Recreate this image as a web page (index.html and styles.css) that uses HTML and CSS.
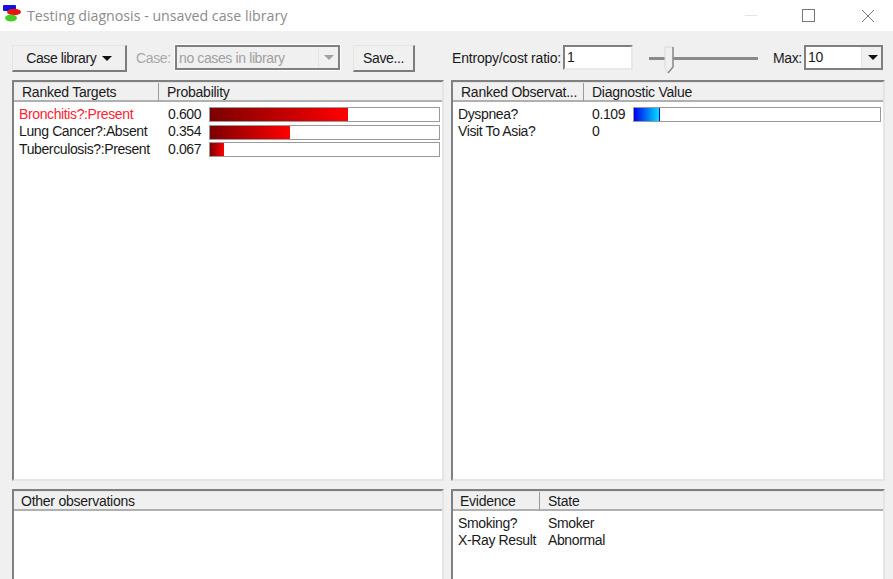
FILE: index.html
```html
<!DOCTYPE html>
<html lang="en">

<head>
    <meta charset="UTF-8">
    <title>Testing diagnosis - unsaved case library</title>
    <link rel="stylesheet" href="styles.css">
</head>

<body>
    <header class="titlebar">
        <svg class="app-icon" width="18" height="17" viewBox="0 0 18 17">
            <rect x="0" y="0" width="13" height="6" rx="1" fill="#1212e0"/>
            <ellipse cx="11" cy="7" rx="7" ry="3.2" fill="#ee1111"/>
            <ellipse cx="8" cy="13" rx="6" ry="3.5" fill="#44cc22"/>
        </svg>
        <span class="title">Testing diagnosis - unsaved case library</span>
        <div class="win-buttons">
            <span class="win-min"></span>
            <span class="win-max"></span>
            <svg class="win-close" width="14" height="14" viewBox="0 0 14 14">
                <path d="M1 1L13 13M13 1L1 13" stroke="#777" stroke-width="1" fill="none"/>
            </svg>
        </div>
    </header>

    <section class="toolbar">
        <button class="btn btn-library">Case library <span class="caret"></span></button>
        <label class="lbl lbl-disabled lbl-case">Case:</label>
        <div class="combo combo-disabled">
            <span class="combo-text">no cases in library</span>
            <span class="combo-arrow"><span class="caret caret-grey"></span></span>
        </div>
        <button class="btn btn-save">Save...</button>
        <label class="lbl lbl-ratio">Entropy/cost ratio:</label>
        <div class="textbox">1</div>
        <div class="slider">
            <div class="slider-track"></div>
            <svg class="slider-thumb" width="11" height="29" viewBox="0 0 11 29">
                <path d="M1 1H9V21L4 27L1 22Z" fill="#f0f0f0" stroke="#d8d8d8"/>
                <path d="M9 1V21L4 27" fill="none" stroke="#8a8a8a" stroke-width="1.5"/>
            </svg>
        </div>
        <label class="lbl lbl-max">Max:</label>
        <div class="combo combo-max">
            <span class="combo-text">10</span>
            <span class="combo-arrow"><span class="caret"></span></span>
        </div>
    </section>

    <main class="panels">
        <section class="panel">
            <div class="head">
                <div class="col-target">Ranked Targets</div>
                <div class="col-rest">Probability</div>
            </div>
            <div class="rows">
                <div class="row">
                    <span class="name-target hot">Bronchitis?:Present</span>
                    <span class="val">0.600</span>
                    <div class="bar"><div class="fill red" style="width: 60.3%"></div></div>
                </div>
                <div class="row">
                    <span class="name-target">Lung Cancer?:Absent</span>
                    <span class="val">0.354</span>
                    <div class="bar"><div class="fill red" style="width: 35%"></div></div>
                </div>
                <div class="row">
                    <span class="name-target">Tuberculosis?:Present</span>
                    <span class="val">0.067</span>
                    <div class="bar"><div class="fill red" style="width: 6.2%"></div></div>
                </div>
            </div>
        </section>

        <section class="panel">
            <div class="head">
                <div class="col-obs">Ranked Observat...</div>
                <div class="col-rest">Diagnostic Value</div>
            </div>
            <div class="rows">
                <div class="row">
                    <span class="name-obs">Dyspnea?</span>
                    <span class="val val-obs">0.109</span>
                    <div class="bar"><div class="fill blue" style="width: 10%"></div></div>
                </div>
                <div class="row">
                    <span class="name-obs">Visit To Asia?</span>
                    <span class="val val-obs">0</span>
                </div>
            </div>
        </section>

        <section class="panel">
            <div class="head">
                <div class="col-full">Other observations</div>
            </div>
        </section>

        <section class="panel">
            <div class="head">
                <div class="col-evidence">Evidence</div>
                <div class="col-rest">State</div>
            </div>
            <div class="rows">
                <div class="row">
                    <span class="name-evidence">Smoking?</span>
                    <span>Smoker</span>
                </div>
                <div class="row">
                    <span class="name-evidence">X-Ray Result</span>
                    <span>Abnormal</span>
                </div>
            </div>
        </section>
    </main>
</body>

</html>
```

FILE: styles.css
```css
html, body {
    margin: 0;
    height: 579px;
    overflow: hidden;
}

body {
    background-color: #f0f0f0;
    font-family: "Liberation Sans", Arial, sans-serif;
    font-size: 14px;
    letter-spacing: -0.38px;
    color: #1a1a1a;
}

.titlebar {
    height: 31px;
    background-color: #fff;
    display: flex;
    align-items: center;
    padding-left: 3px;
}

.app-icon {
    margin-right: 6px;
    margin-top: -4px;
}

.title {
    color: #8c8c8c;
    font-family: "Open Sans", sans-serif;
    font-size: 14.2px;
    letter-spacing: 0;
    margin-top: -1px;
}

.win-buttons {
    margin-left: auto;
    display: flex;
    align-items: center;
}

.win-min {
    width: 12px;
    height: 1px;
    background-color: #e4e4e4;
    margin-right: 45px;
}

.win-max {
    width: 11px;
    height: 11px;
    border: 1px solid #777;
    margin-right: 46px;
}

.win-close {
    margin-right: 18px;
}

.toolbar {
    height: 49px;
    padding: 14px 0 0 12px;
    box-sizing: border-box;
    display: flex;
    align-items: flex-start;
}

.btn {
    height: 27px;
    padding: 0;
    background-color: #f0f0f0;
    border: 1px solid #e4e4e4;
    border-right: 2px solid #7c7c7c;
    border-bottom: 2px solid #7c7c7c;
    font: inherit;
    letter-spacing: inherit;
    color: inherit;
}

.btn-library {
    width: 115px;
}

.btn-save {
    width: 62px;
    margin-left: 13px;
}

.caret {
    display: inline-block;
    width: 0;
    height: 0;
    border-left: 5px solid transparent;
    border-right: 5px solid transparent;
    border-top: 5px solid #111;
    vertical-align: 2px;
    margin-left: 2px;
}

.caret-grey {
    border-top-color: #a0a0a0;
    margin: 0;
}

.lbl {
    line-height: 27px;
}

.lbl-disabled {
    color: #a8a8a8;
}

.lbl-case {
    margin-left: 9px;
    width: 39px;
}

.lbl-ratio {
    margin-left: 37px;
    width: 111px;
    letter-spacing: -0.2px;
}

.lbl-max {
    margin-left: 15px;
    width: 31px;
}

.combo, .textbox {
    height: 25px;
    box-sizing: border-box;
    border: 2px solid #808080;
    border-right-color: #e8e8e8;
    border-bottom-color: #e8e8e8;
    line-height: 21px;
    padding-left: 2px;
}

.combo {
    display: flex;
    justify-content: space-between;
    background-color: #f0f0f0;
}

.combo-disabled {
    width: 165px;
    color: #a0a0a0;
    line-height: 23px;
    border-right-color: #808080;
    border-bottom-color: #808080;
    outline: 1px solid #fff;
}

.combo-max {
    width: 79px;
    background-color: #fff;
    border-right-color: #808080;
    border-bottom-color: #808080;
}

.combo-text {
    flex: 1;
}

.combo-arrow {
    width: 19px;
    background-color: #f0f0f0;
    border-left: 1px solid #e4e4e4;
    display: flex;
    align-items: center;
    justify-content: center;
}

.textbox {
    width: 70px;
    background-color: #fff;
}

.slider {
    position: relative;
    width: 109px;
    height: 25px;
    margin-left: 16px;
}

.slider-track {
    height: 3px;
    margin-top: 12px;
    background-color: #8a8a8a;
}

.slider-thumb {
    position: absolute;
    left: 15px;
    top: 1px;
}

.panels {
    display: grid;
    grid-template-columns: 432px 434px;
    grid-template-rows: 401px 100px;
    column-gap: 7px;
    row-gap: 8px;
    padding-left: 12px;
}

.panel {
    background-color: #fff;
    border: 2px solid #808080;
    border-right-color: #e4e4e4;
    border-bottom-color: #e4e4e4;
    overflow: hidden;
}

.head {
    display: flex;
    height: 19px;
    line-height: 17px;
    letter-spacing: -0.25px;
    background-color: #f0f0f0;
    border-top: 1px solid #e4e4e4;
}

.head div {
    box-sizing: border-box;
    padding-top: 1px;
    padding-left: 8px;
    border-bottom: 2px solid #b0b0b0;
}

.col-target {
    width: 145px;
    border-right: 1px solid #9a9a9a;
}

.col-obs {
    width: 131px;
    border-right: 1px solid #9a9a9a;
}

.col-evidence {
    width: 87px;
    border-right: 1px solid #9a9a9a;
}

.col-rest, .col-full {
    flex: 1;
}

.head .col-full, .head .col-evidence {
    padding-left: 7px;
}

.rows {
    padding: 4px 2px 0 5px;
}

.row {
    display: flex;
    align-items: center;
    height: 17.5px;
}

.row span {
    padding-bottom: 2px;
}

.name-target {
    width: 149px;
    white-space: nowrap;
}

.name-obs {
    width: 134px;
    white-space: nowrap;
}

.name-evidence {
    width: 90px;
    white-space: nowrap;
}

.hot {
    color: #ff2233;
}

.val {
    width: 41px;
}

.bar {
    flex: 1;
    height: 15px;
    box-sizing: border-box;
    border: 1px solid #9a9a9a;
    background-color: #fff;
}

.fill {
    height: 100%;
}

.red {
    background: linear-gradient(to right, #7c0000, #ff0000);
}

.blue {
    background: linear-gradient(to right, #0000ee, #00e0ff);
    border-right: 1px solid #0000ee;
}
```
